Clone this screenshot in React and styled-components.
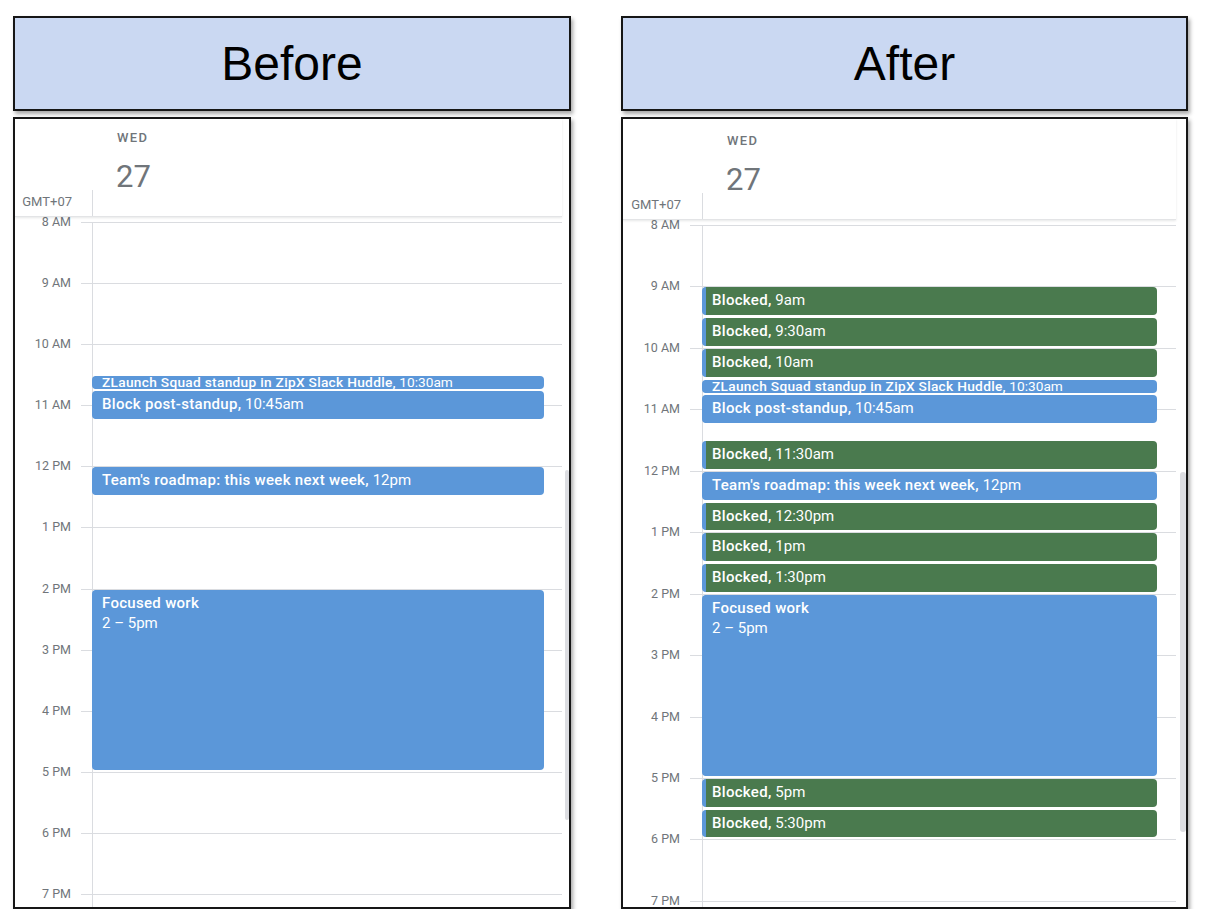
import React from 'react';
import styled, { createGlobalStyle } from 'styled-components';

const BLUE = '#5b97d9';
const GREEN = '#4a7a4e';
const GRAY = '#70757a';
const LINE = '#dadce0';

const GlobalStyle = createGlobalStyle`
  html, body {
    margin: 0;
    padding: 0;
    background: #fff;
  }
  body {
    font-family: Roboto, "Liberation Sans", Arial, sans-serif;
  }
`;

const HOURS = ['8 AM', '9 AM', '10 AM', '11 AM', '12 PM', '1 PM', '2 PM', '3 PM', '4 PM', '5 PM', '6 PM', '7 PM'];

const BEFORE = [
  { title: 'ZLaunch Squad standup in ZipX Slack Huddle', time: '10:30am', start: 10.5, dur: 0.25, color: BLUE },
  { title: 'Block post-standup', time: '10:45am', start: 10.75, dur: 0.5, color: BLUE },
  { title: "Team's roadmap: this week next week", time: '12pm', start: 12, dur: 0.5, color: BLUE },
  { title: 'Focused work', time: '2 – 5pm', start: 14, dur: 3, color: BLUE },
];

const blocked = (time, start) => ({ title: 'Blocked', time, start, dur: 0.5, color: GREEN });

const AFTER = [
  blocked('9am', 9),
  blocked('9:30am', 9.5),
  blocked('10am', 10),
  { title: 'ZLaunch Squad standup in ZipX Slack Huddle', time: '10:30am', start: 10.5, dur: 0.25, color: BLUE },
  { title: 'Block post-standup', time: '10:45am', start: 10.75, dur: 0.5, color: BLUE },
  blocked('11:30am', 11.5),
  { title: "Team's roadmap: this week next week", time: '12pm', start: 12, dur: 0.5, color: BLUE },
  blocked('12:30pm', 12.5),
  blocked('1pm', 13),
  blocked('1:30pm', 13.5),
  { title: 'Focused work', time: '2 – 5pm', start: 14, dur: 3, color: BLUE },
  blocked('5pm', 17),
  blocked('5:30pm', 17.5),
];

const LEFT = {
  width: 558, headerH: 98, dateH: 71, dateTop: 11, dateLeft: 102, gutter: 77, tick: 11,
  hourH: 61.1, track: 7, thumbW: 4, thumbTop: 248, thumbH: 350, eventRight: 18,
};

const RIGHT = {
  width: 567, headerH: 101, dateH: 74, dateTop: 14, dateLeft: 104, gutter: 79, tick: 12,
  hourH: 61.45, track: 10, thumbW: 6, thumbTop: 247, thumbH: 360, eventRight: 19,
};

const Page = styled.div`
  display: flex;
  gap: 50px;
  padding: 16px 0 0 13px;
`;

const Side = styled.section`
  display: flex;
  flex-direction: column;
  gap: 6px;
  width: ${(p) => p.$width}px;
`;

const TitleBox = styled.div`
  height: 95px;
  box-sizing: border-box;
  border: 2px solid #161616;
  background: #cad8f2;
  box-shadow: 2px 3px 4px rgba(0, 0, 0, 0.35);
  display: flex;
  align-items: center;
  justify-content: center;
  font-family: "Liberation Sans", Arial, sans-serif;
  font-size: 48px;
  color: #000;
`;

const Card = styled.div`
  height: 792px;
  box-sizing: border-box;
  border: 2px solid #161616;
  background: #fff;
  box-shadow: 2px 3px 4px rgba(0, 0, 0, 0.35);
  display: flex;
  flex-direction: column;
  overflow: hidden;
`;

const DayHeader = styled.header`
  flex: none;
  height: ${(p) => p.$cfg.headerH}px;
  box-sizing: border-box;
  margin-right: ${(p) => p.$cfg.track}px;
  display: flex;
  flex-direction: column;
  border-bottom: 1px solid #e3e4e6;
  box-shadow: 0 1px 2px rgba(60, 64, 67, 0.12);
  position: relative;
  z-index: 1;
`;

const DateBlock = styled.div`
  flex: none;
  height: ${(p) => p.$cfg.dateH}px;
  box-sizing: border-box;
  padding: ${(p) => p.$cfg.dateTop}px 0 0 ${(p) => p.$cfg.dateLeft}px;
`;

const Weekday = styled.div`
  font-size: 13px;
  font-weight: 500;
  letter-spacing: 1.3px;
  line-height: 16px;
  color: ${GRAY};
`;

const DateNum = styled.div`
  font-size: 31px;
  line-height: 32px;
  margin-top: 15px;
  margin-left: -1px;
  color: ${GRAY};
`;

const HeaderRow = styled.div`
  flex: 1;
  display: flex;
`;

const Zone = styled.div`
  width: ${(p) => p.$cfg.gutter}px;
  box-sizing: border-box;
  padding-right: ${(p) => p.$cfg.tick + 9}px;
  text-align: right;
  font-size: 13px;
  line-height: 24px;
  color: ${GRAY};
`;

const HeaderCell = styled.div`
  flex: 1;
  border-left: 1px solid ${LINE};
`;

const Body = styled.div`
  flex: 1;
  display: flex;
  overflow: hidden;
  padding-top: 5px;
`;

const Gutter = styled.div`
  flex: none;
  width: ${(p) => p.$cfg.gutter}px;
`;

const GutterRow = styled.div`
  height: ${(p) => p.$h}px;
  display: flex;
  justify-content: flex-end;
  align-items: flex-start;
`;

const HourLabel = styled.span`
  transform: translateY(-50%);
  margin-right: 10px;
  font-size: 12.5px;
  line-height: 14px;
  color: ${GRAY};
`;

const Tick = styled.span`
  width: ${(p) => p.$w}px;
  border-top: 1px solid ${LINE};
`;

const DayColumn = styled.div`
  flex: 1;
  position: relative;
  border-left: 1px solid ${LINE};
`;

const GridRow = styled.div`
  height: ${(p) => p.$h}px;
  box-sizing: border-box;
  border-top: 1px solid ${LINE};
`;

const ScrollTrack = styled.div`
  flex: none;
  width: ${(p) => p.$cfg.track}px;
  box-sizing: border-box;
  padding-top: ${(p) => p.$cfg.thumbTop}px;
  display: flex;
  flex-direction: column;
  align-items: flex-end;
`;

const Thumb = styled.div`
  width: ${(p) => p.$cfg.thumbW}px;
  height: ${(p) => p.$cfg.thumbH}px;
  background: #dcdde1;
  border-radius: 3px;
`;

const Event = styled.div`
  position: absolute;
  left: -1px;
  right: ${(p) => p.$right}px;
  box-sizing: border-box;
  background: ${(p) => p.$color};
  border-left: 4px solid ${BLUE};
  border-radius: 4px;
  color: #fff;
  padding: ${(p) => (p.$compact ? '0 6px' : '3px 6px')};
  font-size: ${(p) => (p.$compact ? '13.7px' : '15px')};
  line-height: ${(p) => (p.$compact ? '13px' : '20px')};
  white-space: nowrap;
  overflow: ${(p) => (p.$compact ? 'visible' : 'hidden')};
`;

const Title = styled.span`
  font-weight: 500;
  letter-spacing: 0.3px;
`;

function Calendar({ cfg, events }) {
  return (
    <Card>
      <DayHeader $cfg={cfg}>
        <DateBlock $cfg={cfg}>
          <Weekday>WED</Weekday>
          <DateNum>27</DateNum>
        </DateBlock>
        <HeaderRow>
          <Zone $cfg={cfg}>GMT+07</Zone>
          <HeaderCell />
        </HeaderRow>
      </DayHeader>
      <Body>
        <Gutter $cfg={cfg}>
          {HOURS.map((h) => (
            <GutterRow key={h} $h={cfg.hourH}>
              <HourLabel>{h}</HourLabel>
              <Tick $w={cfg.tick} />
            </GutterRow>
          ))}
        </Gutter>
        <DayColumn>
          {HOURS.map((h) => (
            <GridRow key={h} $h={cfg.hourH} />
          ))}
          {events.map((e) => {
            const compact = e.dur < 0.5;
            const stacked = e.dur >= 1;
            return (
              <Event
                key={e.title + e.time}
                $color={e.color}
                $compact={compact}
                $right={cfg.eventRight}
                style={{
                  top: (e.start - 8) * cfg.hourH + 1,
                  height: e.dur * cfg.hourH - (compact ? 2 : 3),
                }}
              >
                {stacked ? (
                  <>
                    <Title>{e.title}</Title>
                    <div>{e.time}</div>
                  </>
                ) : (
                  <>
                    <Title>{e.title},</Title> {e.time}
                  </>
                )}
              </Event>
            );
          })}
        </DayColumn>
        <ScrollTrack $cfg={cfg}>
          <Thumb $cfg={cfg} />
        </ScrollTrack>
      </Body>
    </Card>
  );
}

export default function App() {
  return (
    <>
      <GlobalStyle />
      <Page>
        <Side $width={LEFT.width}>
          <TitleBox>Before</TitleBox>
          <Calendar cfg={LEFT} events={BEFORE} />
        </Side>
        <Side $width={RIGHT.width}>
          <TitleBox>After</TitleBox>
          <Calendar cfg={RIGHT} events={AFTER} />
        </Side>
      </Page>
    </>
  );
}
